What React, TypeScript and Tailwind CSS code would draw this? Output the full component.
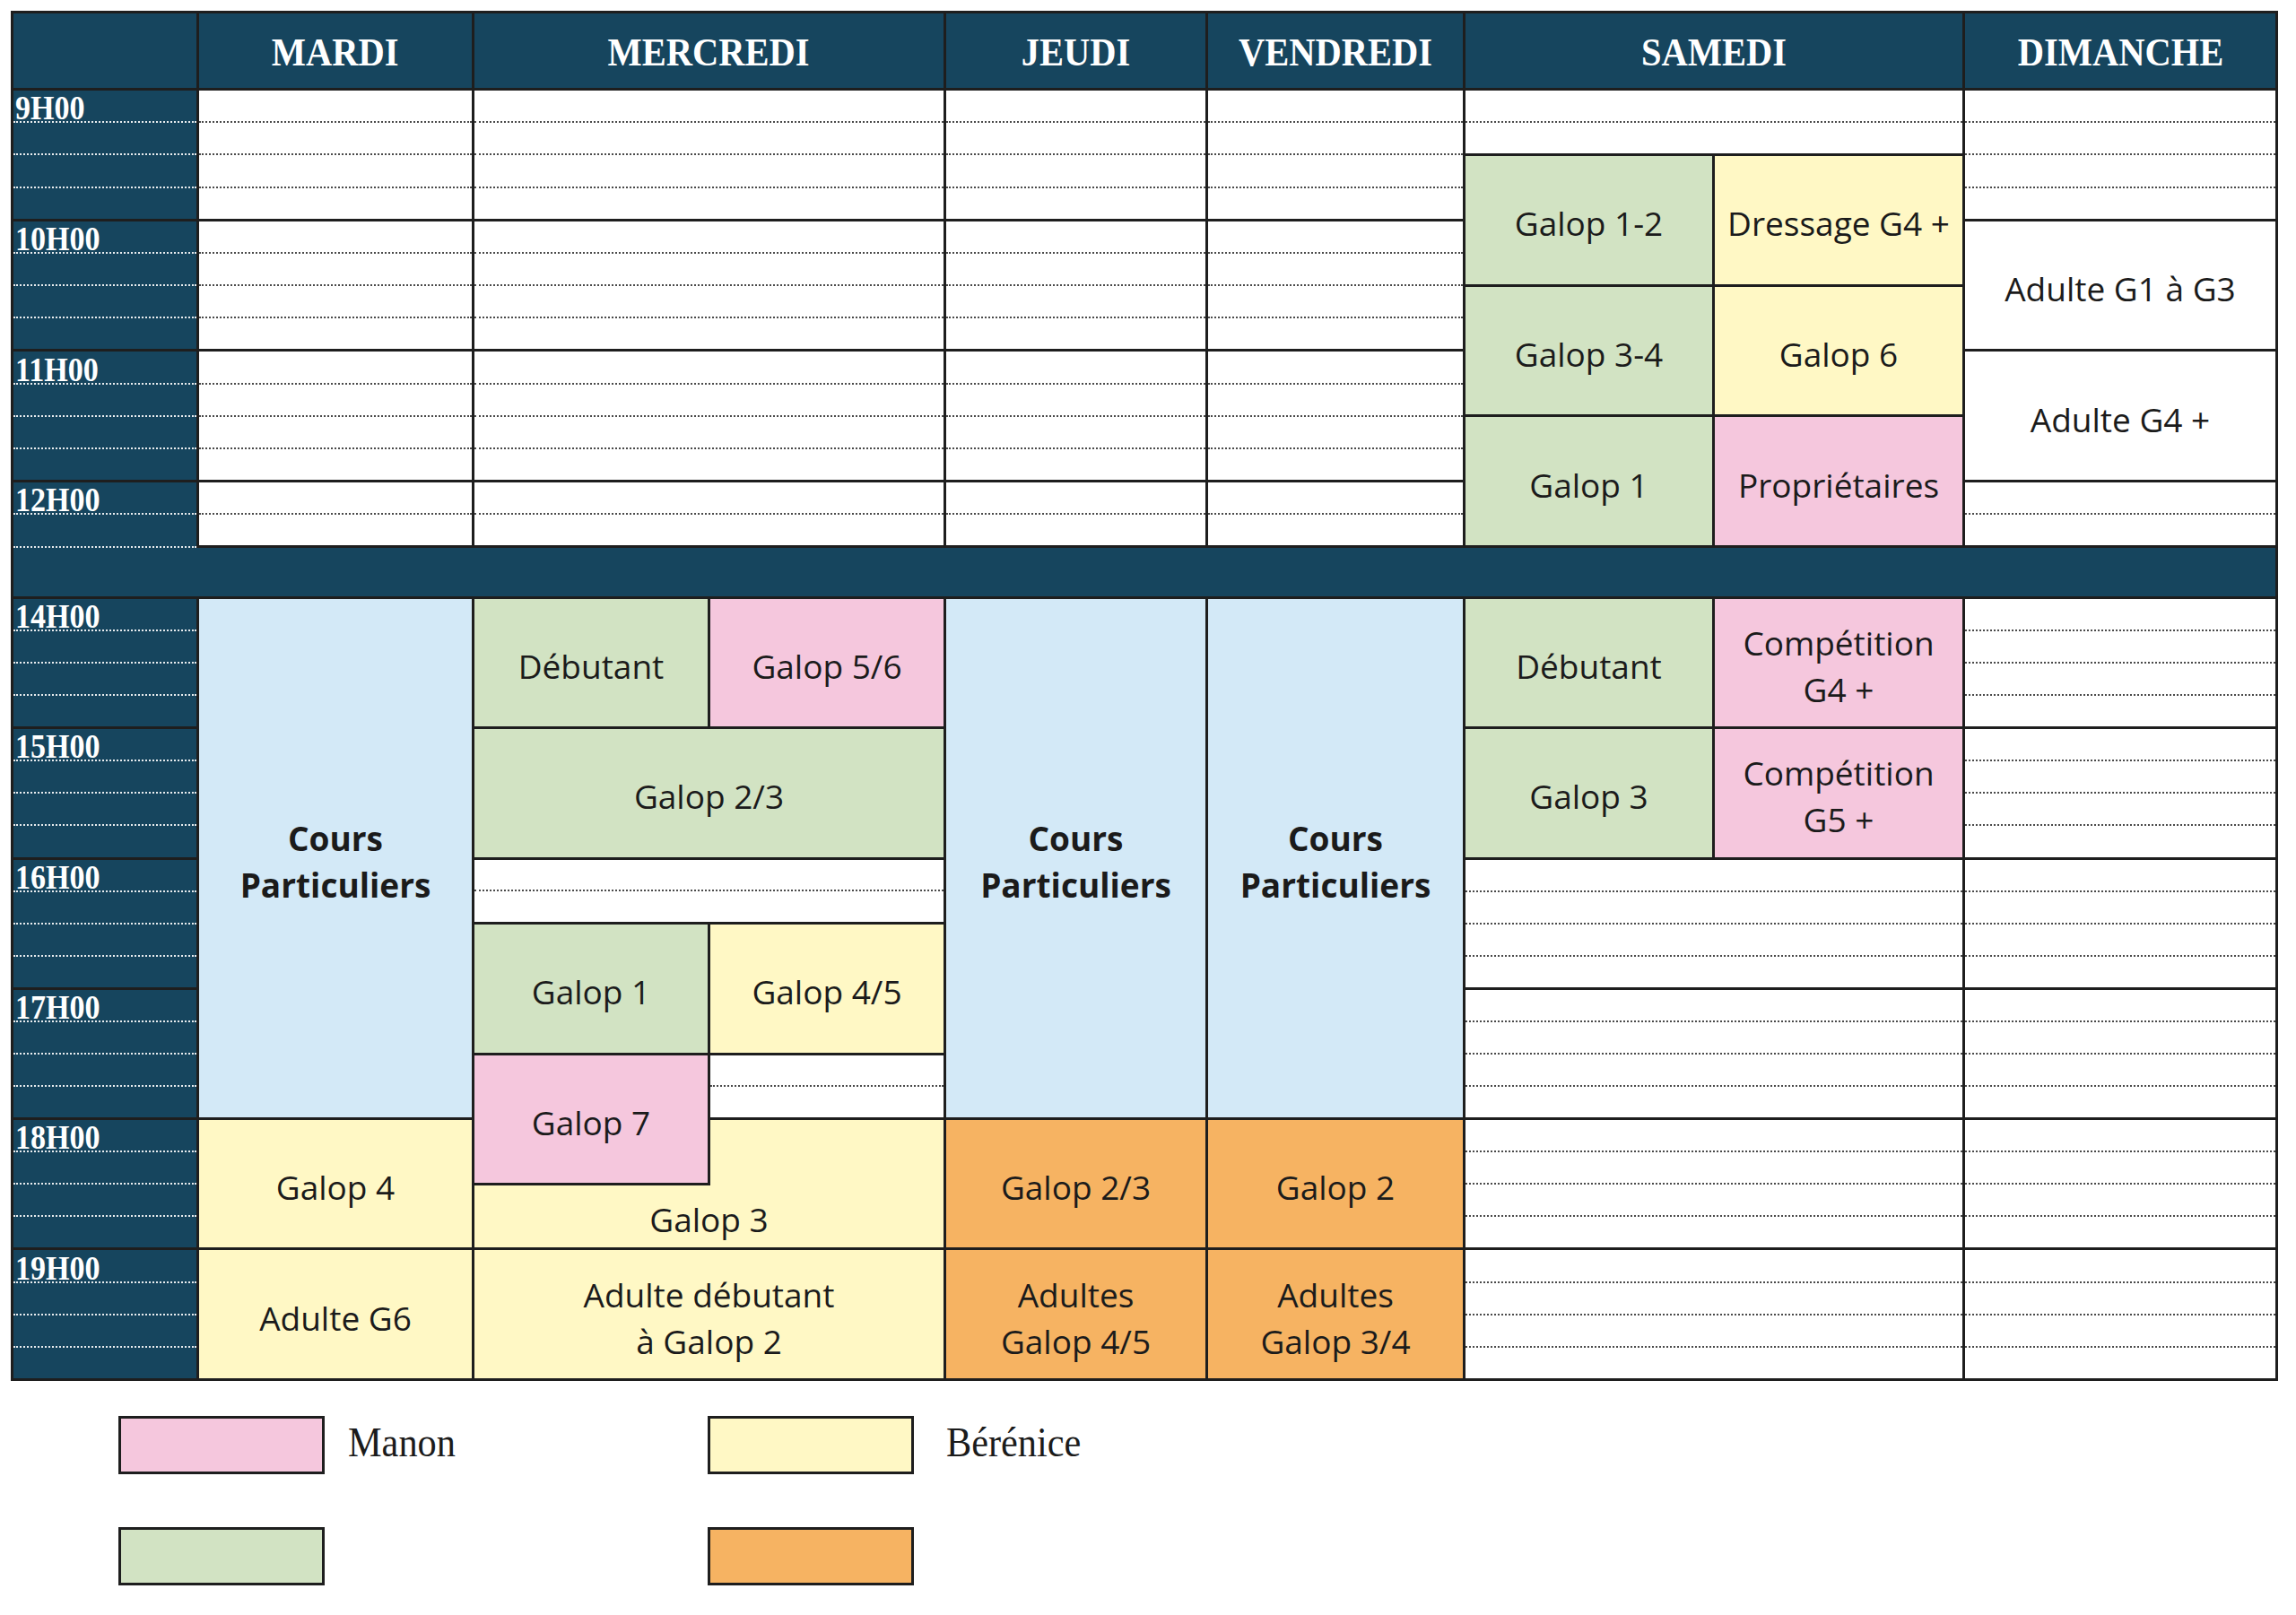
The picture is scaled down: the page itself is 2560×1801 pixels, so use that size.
import React from "react";

type Block = {
  c: [number, number];
  from: string;
  to: string;
  kind: "empty" | "class" | "time";
  bg?: string;
  label?: string[];
  bold?: boolean;
  lowerHalf?: boolean;
  dottedLast?: boolean;
};

// grid line for a time, morning rows 2..16, lunch row 16..17, afternoon 17..41
function line(t: string) {
  const [h, m] = t.split(":").map(Number);
  if (h < 13) return (h - 9) * 4 + m / 15 + 2;
  return (h - 14) * 4 + m / 15 + 17;
}

const blue = "bg-[#d3e9f7]";
const green = "bg-[#d2e3c3]";
const yellow = "bg-[#fff8c5]";
const pink = "bg-[#f5c7dd]";
const orange = "bg-[#f6b362]";

const days: { label: string; c: [number, number] }[] = [
  { label: "MARDI", c: [2, 3] },
  { label: "MERCREDI", c: [3, 5] },
  { label: "JEUDI", c: [5, 6] },
  { label: "VENDREDI", c: [6, 7] },
  { label: "SAMEDI", c: [7, 9] },
  { label: "DIMANCHE", c: [9, 10] },
];

const hours = ["9", "10", "11", "12", "14", "15", "16", "17", "18", "19"];

const morningEmpty = (c: [number, number]): Block[] => [
  { c, from: "9:00", to: "10:00", kind: "empty" },
  { c, from: "10:00", to: "11:00", kind: "empty" },
  { c, from: "11:00", to: "12:00", kind: "empty" },
  { c, from: "12:00", to: "12:30", kind: "empty" },
];

const blocks: Block[] = [
  // time column
  ...hours.map((h): Block => {
    const n = Number(h);
    if (n === 12) return { c: [1, 2], from: "12:00", to: "12:30", kind: "time", label: [h + "H00"], dottedLast: true };
    return { c: [1, 2], from: `${n}:00`, to: `${n + 1}:00`, kind: "time", label: [h + "H00"] };
  }),

  // mardi
  ...morningEmpty([2, 3]),
  { c: [2, 3], from: "14:00", to: "18:00", kind: "class", bg: blue, label: ["Cours", "Particuliers"], bold: true },
  { c: [2, 3], from: "18:00", to: "19:00", kind: "class", bg: yellow, label: ["Galop 4"] },
  { c: [2, 3], from: "19:00", to: "20:00", kind: "class", bg: yellow, label: ["Adulte G6"] },

  // mercredi
  ...morningEmpty([3, 5]),
  { c: [3, 4], from: "14:00", to: "15:00", kind: "class", bg: green, label: ["Débutant"] },
  { c: [4, 5], from: "14:00", to: "15:00", kind: "class", bg: pink, label: ["Galop 5/6"] },
  { c: [3, 5], from: "15:00", to: "16:00", kind: "class", bg: green, label: ["Galop 2/3"] },
  { c: [3, 5], from: "16:00", to: "16:30", kind: "empty" },
  { c: [3, 4], from: "16:30", to: "17:30", kind: "class", bg: green, label: ["Galop 1"] },
  { c: [4, 5], from: "16:30", to: "17:30", kind: "class", bg: yellow, label: ["Galop 4/5"] },
  { c: [4, 5], from: "17:30", to: "18:00", kind: "empty" },
  { c: [3, 5], from: "18:00", to: "19:00", kind: "class", bg: yellow, label: ["Galop 3"], lowerHalf: true },
  { c: [3, 4], from: "17:30", to: "18:30", kind: "class", bg: pink, label: ["Galop 7"] },
  { c: [3, 5], from: "19:00", to: "20:00", kind: "class", bg: yellow, label: ["Adulte débutant", "à Galop 2"] },

  // jeudi
  ...morningEmpty([5, 6]),
  { c: [5, 6], from: "14:00", to: "18:00", kind: "class", bg: blue, label: ["Cours", "Particuliers"], bold: true },
  { c: [5, 6], from: "18:00", to: "19:00", kind: "class", bg: orange, label: ["Galop 2/3"] },
  { c: [5, 6], from: "19:00", to: "20:00", kind: "class", bg: orange, label: ["Adultes", "Galop 4/5"] },

  // vendredi
  ...morningEmpty([6, 7]),
  { c: [6, 7], from: "14:00", to: "18:00", kind: "class", bg: blue, label: ["Cours", "Particuliers"], bold: true },
  { c: [6, 7], from: "18:00", to: "19:00", kind: "class", bg: orange, label: ["Galop 2"] },
  { c: [6, 7], from: "19:00", to: "20:00", kind: "class", bg: orange, label: ["Adultes", "Galop 3/4"] },

  // samedi
  { c: [7, 9], from: "9:00", to: "9:30", kind: "empty" },
  { c: [7, 8], from: "9:30", to: "10:30", kind: "class", bg: green, label: ["Galop 1-2"] },
  { c: [8, 9], from: "9:30", to: "10:30", kind: "class", bg: yellow, label: ["Dressage G4 +"] },
  { c: [7, 8], from: "10:30", to: "11:30", kind: "class", bg: green, label: ["Galop 3-4"] },
  { c: [8, 9], from: "10:30", to: "11:30", kind: "class", bg: yellow, label: ["Galop 6"] },
  { c: [7, 8], from: "11:30", to: "12:30", kind: "class", bg: green, label: ["Galop 1"] },
  { c: [8, 9], from: "11:30", to: "12:30", kind: "class", bg: pink, label: ["Propriétaires"] },
  { c: [7, 8], from: "14:00", to: "15:00", kind: "class", bg: green, label: ["Débutant"] },
  { c: [8, 9], from: "14:00", to: "15:00", kind: "class", bg: pink, label: ["Compétition", "G4 +"] },
  { c: [7, 8], from: "15:00", to: "16:00", kind: "class", bg: green, label: ["Galop 3"] },
  { c: [8, 9], from: "15:00", to: "16:00", kind: "class", bg: pink, label: ["Compétition", "G5 +"] },
  { c: [7, 9], from: "16:00", to: "17:00", kind: "empty" },
  { c: [7, 9], from: "17:00", to: "18:00", kind: "empty" },
  { c: [7, 9], from: "18:00", to: "19:00", kind: "empty" },
  { c: [7, 9], from: "19:00", to: "20:00", kind: "empty" },

  // dimanche
  { c: [9, 10], from: "9:00", to: "10:00", kind: "empty" },
  { c: [9, 10], from: "10:00", to: "11:00", kind: "class", bg: "bg-white", label: ["Adulte G1 à G3"] },
  { c: [9, 10], from: "11:00", to: "12:00", kind: "class", bg: "bg-white", label: ["Adulte G4 +"] },
  { c: [9, 10], from: "12:00", to: "12:30", kind: "empty" },
  { c: [9, 10], from: "14:00", to: "15:00", kind: "empty" },
  { c: [9, 10], from: "15:00", to: "16:00", kind: "empty" },
  { c: [9, 10], from: "16:00", to: "17:00", kind: "empty" },
  { c: [9, 10], from: "17:00", to: "18:00", kind: "empty" },
  { c: [9, 10], from: "18:00", to: "19:00", kind: "empty" },
  { c: [9, 10], from: "19:00", to: "20:00", kind: "empty" },
];

function Label({ lines, bold }: { lines: string[]; bold?: boolean }) {
  return (
    <div
      className={
        "pt-[8px] text-center text-[37px] leading-[52px] text-[#1b1b1b] font-['Open_Sans',sans-serif] " +
        (bold ? "font-bold" : "font-normal")
      }
    >
      {lines.map((l) => (
        <div key={l}>{l}</div>
      ))}
    </div>
  );
}

function Cell({ b }: { b: Block }) {
  const n = line(b.to) - line(b.from);
  const style = { gridColumn: `${b.c[0]} / ${b.c[1]}`, gridRow: `${line(b.from)} / ${line(b.to)}` };

  if (b.kind === "time") {
    return (
      <div
        style={style}
        className={
          "flex flex-col bg-[#16455e] border-r-[3px] border-[#1e1e1e] " + (b.dottedLast ? "" : "border-b-[3px]")
        }
      >
        {Array.from({ length: n }).map((_, i) => (
          <div
            key={i}
            className={
              "flex-1 flex items-end pl-[2px] " +
              (i < n - 1 || b.dottedLast ? "border-b-2 border-dotted border-white/90" : "")
            }
          >
            {i === 0 && (
              <span className="inline-block origin-left scale-x-[0.92] text-white font-bold text-[37px] leading-[29px] font-['Liberation_Serif',serif]">
                {b.label![0]}
              </span>
            )}
          </div>
        ))}
      </div>
    );
  }

  if (b.kind === "empty") {
    return (
      <div style={style} className="flex flex-col bg-white border-r-[3px] border-b-[3px] border-[#1e1e1e]">
        {Array.from({ length: n }).map((_, i) => (
          <div key={i} className={"flex-1 " + (i < n - 1 ? "border-b-2 border-dotted border-[#4a4a4a]" : "")} />
        ))}
      </div>
    );
  }

  if (b.lowerHalf) {
    return (
      <div style={style} className={"flex flex-col border-r-[3px] border-b-[3px] border-[#1e1e1e] " + b.bg}>
        <div className="flex-1" />
        <div className="flex-1 flex items-center justify-center">
          <Label lines={b.label!} />
        </div>
      </div>
    );
  }

  return (
    <div
      style={style}
      className={"flex items-center justify-center border-r-[3px] border-b-[3px] border-[#1e1e1e] " + b.bg}
    >
      <Label lines={b.label!} bold={b.bold} />
    </div>
  );
}

function LegendItem({ color, name, gap }: { color: string; name?: string; gap?: string }) {
  return (
    <div className={"flex items-center " + (gap ?? "gap-[26px]")}>
      <div className={"w-[230px] h-[65px] border-[3px] border-[#1e1e1e] " + color} />
      {name && (
        <span className="inline-block origin-left scale-x-[0.9] text-[47px] leading-none text-[#1b1b1b] font-['Liberation_Serif',serif] -mt-[6px]">
          {name}
        </span>
      )}
    </div>
  );
}

export default function App() {
  return (
    <div className="min-h-screen bg-white p-[12px]">
      <div className="grid w-[2528px] grid-cols-[207px_307px_263px_263px_292px_287px_278px_279px_349px] grid-rows-[86px_repeat(14,36.43px)_57px_repeat(24,36.33px)] border-l-[3px] border-t-[3px] border-[#1e1e1e]">
        <div className="bg-[#16455e] border-r-[3px] border-b-[3px] border-[#1e1e1e]" style={{ gridColumn: "1 / 2", gridRow: "1 / 2" }} />
        {days.map((d) => (
          <div
            key={d.label}
            style={{ gridColumn: `${d.c[0]} / ${d.c[1]}`, gridRow: "1 / 2" }}
            className="flex items-center justify-center bg-[#16455e] border-r-[3px] border-b-[3px] border-[#1e1e1e]"
          >
            <span className="inline-block scale-x-[0.9] text-white font-bold text-[45px] leading-none font-['Liberation_Serif',serif] mt-[4px]">
              {d.label}
            </span>
          </div>
        ))}

        {blocks.map((b, i) => (
          <Cell key={i} b={b} />
        ))}

        <div
          style={{ gridColumn: "1 / 10", gridRow: "16 / 17" }}
          className="bg-[#16455e] border-r-[3px] border-b-[3px] border-[#1e1e1e]"
        />
      </div>

      <div className="mt-[39px] ml-[120px] grid grid-cols-[657px_auto] gap-y-[59px]">
        <LegendItem color={pink} name="Manon" />
        <LegendItem color={yellow} name="Bérénice" gap="gap-[36px]" />
        <LegendItem color={green} />
        <LegendItem color={orange} />
      </div>
    </div>
  );
}
